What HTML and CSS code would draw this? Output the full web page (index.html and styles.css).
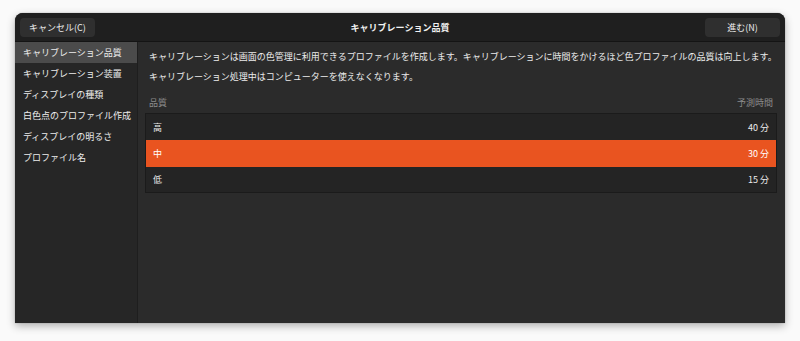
FILE: index.html
```html
<!DOCTYPE html>
<html>
    <head>
        <title>キャリブレーション品質</title>
        <meta charset="utf8"/>
        <link rel="stylesheet" href="styles.css">
    </head>
    <body>
          <div class="window">
                <div class="header">
                    <button class="btn">キャンセル(C)</button>
                    <div class="title">キャリブレーション品質</div>
                    <button class="btn">進む(N)</button>
                </div>
                <div class="main">
                    <ul class="side">
                        <li class="active">キャリブレーション品質</li>
                        <li>キャリブレーション装置</li>
                        <li>ディスプレイの種類</li>
                        <li>白色点のプロファイル作成</li>
                        <li>ディスプレイの明るさ</li>
                        <li>プロファイル名</li>
                    </ul>
                    <div class="content">
                        <p>キャリブレーションは画面の色管理に利用できるプロファイルを作成します。キャリブレーションに時間をかけるほど色プロファイルの品質は向上します。</p>
                        <p>キャリブレーション処理中はコンピューターを使えなくなります。</p>
                        <div class="cols">
                            <span>品質</span>
                            <span>予測時間</span>
                        </div>
                        <div class="list">
                            <div class="row"><span>高</span><span>40 分</span></div>
                            <div class="row active"><span>中</span><span>30 分</span></div>
                            <div class="row"><span>低</span><span>15 分</span></div>
                        </div>
                    </div>
                </div>
          </div>
    </body>
</html>
```

FILE: styles.css
```css
*{
    box-sizing: border-box;
}
body,ul,li,button,p{
    margin: 0px;
    padding: 0px;
    list-style: none;
    border: 0px;
}
body{
    background-color: #fafafa;
    padding: 13px 15px;
    font-family: "Noto Sans CJK JP", "Noto Sans", sans-serif;
    font-size: 9px;
    color: #ececec;
}
.window{
    width: 770px;
    height: 310px;
    border-radius: 8px 8px 0 0;
    overflow: hidden;
    background-color: #2b2b2b;
    box-shadow: 0 3px 8px rgba(0,0,0,0.3), 0 0 1px rgba(0,0,0,0.5);
    display: flex;
    flex-direction: column;
}
.header{
    height: 29px;
    flex: none;
    background-color: #1f1f1f;
    border-bottom: 1px solid #141414;
    display: flex;
    align-items: center;
    justify-content: space-between;
    padding: 0 5px;
}
.btn{
    width: 75px;
    height: 19px;
    border-radius: 4px;
    background-color: #2f2f2f;
    color: #ececec;
    font-family: inherit;
    font-size: 9px;
}
.title{
    font-weight: bold;
    color: #f2f2f2;
}
.main{
    flex: 1;
    display: flex;
}
.side{
    width: 123px;
    flex: none;
    background-color: #262626;
    border-right: 1px solid #1e1e1e;
}
.side li{
    height: 21px;
    line-height: 21px;
    padding-left: 8px;
    white-space: nowrap;
}
.side li.active{
    background-color: #4b4b4b;
}
.content{
    flex: 1;
    padding: 5px 8px 0 7px;
}
.content p{
    line-height: 20px;
    padding-left: 4px;
}
.cols{
    display: flex;
    justify-content: space-between;
    color: #8c8c8c;
    margin-top: 6px;
    height: 20px;
    line-height: 20px;
    padding: 0 4px;
}
.list{
    border: 1px solid #1b1b1b;
    background-color: #242424;
}
.row{
    height: 26px;
    display: flex;
    align-items: center;
    justify-content: space-between;
    padding: 0 7px;
}
.row + .row{
    border-top: 1px solid #1f1f1f;
}
.row.active{
    background-color: #e95420;
    color: #fff;
    border-top-color: #e95420;
}
.row.active + .row{
    border-top-color: #e95420;
}
```
